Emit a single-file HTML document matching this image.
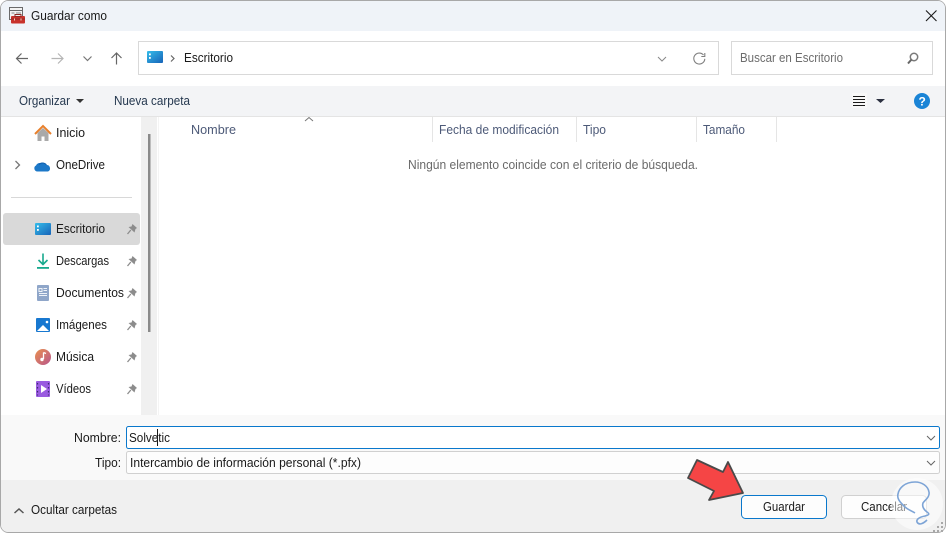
<!DOCTYPE html>
<html><head><meta charset="utf-8"><title>Guardar como</title>
<style>
html,body{margin:0;padding:0;width:946px;height:533px;overflow:hidden;background:#b9b9b9}
svg{display:block;position:absolute;left:0;top:0}
text{font-family:"Liberation Sans",sans-serif;font-size:12.5px;fill:#1a1a1a}
.h{fill:#4d5a78}
</style></head><body>
<svg width="946" height="533" viewBox="0 0 946 533" xmlns="http://www.w3.org/2000/svg">
<defs>
<linearGradient id="dk" x1="0" y1="0" x2="1" y2="1"><stop offset="0" stop-color="#35bdea"/><stop offset="1" stop-color="#1763b8"/></linearGradient>
<linearGradient id="mu" x1="0" y1="0" x2="1" y2="1"><stop offset="0" stop-color="#e9904f"/><stop offset="1" stop-color="#b8568c"/></linearGradient>
<clipPath id="win"><rect x="1" y="1" width="944" height="531" rx="7"/></clipPath>
<g id="pin"><path d="M5.500 0L10 4 8.500 5 7.500 8.500 1.500 3 4.500 2.500z" fill="#8c8c8c"/><path d="M.5 10L3.800 6" stroke="#8c8c8c" stroke-width="1.300" fill="none"/></g>
</defs>
<rect width="946" height="533" fill="#fff"/>
<rect x="0.5" y="0.5" width="945" height="532" rx="8" fill="#fff" stroke="#a8a8a8"/>
<g clip-path="url(#win)">
<rect x="0" y="0" width="946" height="31" fill="#eff3f8"/>
<rect x="0" y="31" width="946" height="55" fill="#fff"/>
<rect x="0" y="86" width="946" height="30" fill="#f3f4f6"/>
<rect x="0" y="116" width="946" height="1" fill="#e4e4e4"/>
<rect x="141" y="117" width="16" height="298" fill="#f0f0f0"/>
<rect x="148" y="134" width="2.500" height="198" fill="#8a8a8a"/>
<rect x="158" y="117" width="1" height="298" fill="#f4f4f4"/>
<rect x="0" y="415" width="946" height="65" fill="#f9f9f9"/>
<rect x="0" y="480" width="946" height="53" fill="#f0f0f0"/>
</g>

<!-- title icon -->
<rect x="9.500" y="7.500" width="13" height="12" fill="#f2f2f2" stroke="#6a6a6a"/>
<path d="M10 10.500h12" stroke="#6a6a6a"/><path d="M11.500 13h3M16 13h5" stroke="#888"/>
<rect x="11" y="16" width="14" height="7.500" rx="1" fill="#c8322b"/>
<rect x="15" y="14.500" width="6" height="2" fill="none" stroke="#8f2a25"/>
<path d="M11 19h14" stroke="#8f2a25"/><path d="M14.500 18.500v2M21 18.500v2" stroke="#f0d0c0"/>
<text x="31" y="20" textLength="76" lengthAdjust="spacingAndGlyphs">Guardar como</text>
<path d="M926 10.500l10.500 10.500M936.500 10.500l-10.500 10.500" stroke="#1a1a1a" stroke-width="1.100" fill="none"/>

<!-- nav buttons -->
<path d="M28 58.500H17M21.500 53.500l-5 5 5 5" stroke="#666" stroke-width="1.200" fill="none"/>
<path d="M51.500 58.500h11M58 53.500l5 5-5 5" stroke="#b5b5b5" stroke-width="1.200" fill="none"/>
<path d="M83.500 56.500l4 4 4-4" stroke="#777" stroke-width="1.200" fill="none"/>
<path d="M116.500 64.500v-11M111.500 58l5-5 5 5" stroke="#666" stroke-width="1.200" fill="none"/>

<!-- address -->
<rect x="138.500" y="41.500" width="580" height="33" fill="#fff" stroke="#d9d9d9" stroke-width="1"/>
<rect x="147" y="51" width="16" height="12" rx="1" fill="url(#dk)"/>
<rect x="149" y="53.500" width="1.800" height="1.800" fill="#fff"/><rect x="149" y="57" width="1.800" height="1.800" fill="#fff"/>
<path d="M171 55.500l3 3-3 3" stroke="#666" stroke-width="1.200" fill="none"/>
<text x="184" y="62" textLength="49" lengthAdjust="spacingAndGlyphs">Escritorio</text>
<path d="M658 57l4 4 4-4" stroke="#888" fill="none"/>
<path d="M703.500 55a5.500 5.500 0 1 0 1.300 3.800" stroke="#808080" stroke-width="1.100" fill="none"/>
<path d="M704.800 53v3.500h-3.500" stroke="#808080" stroke-width="1.100" fill="none"/>

<!-- search -->
<rect x="731.500" y="41.500" width="201" height="33" fill="#fff" stroke="#d9d9d9" stroke-width="1"/>
<text x="740" y="62" textLength="103" lengthAdjust="spacingAndGlyphs" style="fill:#6d6d6d">Buscar en Escritorio</text>
<circle cx="914" cy="57" r="3.700" fill="none" stroke="#7a7a7a" stroke-width="1.500"/>
<path d="M911.500 59.500l-3.500 4" stroke="#666" stroke-width="2" fill="none"/>

<!-- toolbar -->
<text x="19" y="105" textLength="51" lengthAdjust="spacingAndGlyphs" style="fill:#25384f">Organizar</text>
<path d="M76 99h8l-4 4z" fill="#333"/>
<text x="114" y="105" textLength="76" lengthAdjust="spacingAndGlyphs" style="fill:#25384f">Nueva carpeta</text>
<rect x="852" y="93" width="15" height="15" fill="#f8f8f8"/>
<path d="M853 96.500h12M853 99.500h12M853 102.500h12M853 105.500h12" stroke="#1a1a1a" stroke-width="1"/>
<path d="M876 99h9l-4.500 4z" fill="#2b3040"/>
<circle cx="922" cy="101" r="8" fill="#1a84d6"/>
<text x="918.500" y="105.500" style="fill:#fff;font-weight:bold;font-size:12px">?</text>

<!-- headers -->
<path d="M305 121l4-3.500 4 3.500" stroke="#777" fill="none"/>
<text class="h" x="191" y="134" textLength="45" lengthAdjust="spacingAndGlyphs">Nombre</text>
<text class="h" x="439" y="134" textLength="120" lengthAdjust="spacingAndGlyphs">Fecha de modificación</text>
<text class="h" x="583" y="134" textLength="23" lengthAdjust="spacingAndGlyphs">Tipo</text>
<text class="h" x="703" y="134" textLength="42" lengthAdjust="spacingAndGlyphs">Tamaño</text>
<path d="M432.500 117v25M576.500 117v25M696.500 117v25M776.500 117v25" stroke="#e5e5e5"/>
<text x="408" y="169" textLength="290" lengthAdjust="spacingAndGlyphs" style="fill:#6a6a6a">Ningún elemento coincide con el criterio de búsqueda.</text>

<!-- nav pane -->
<path d="M37.500 133l5.500-5 5.500 5v8h-4v-4.500h-3v4.500h-4z" fill="#a9a9a9"/>
<path d="M35 134l8-8 8 8" fill="none" stroke="#e8802c" stroke-width="2"/>
<text x="56" y="137" textLength="29" lengthAdjust="spacingAndGlyphs">Inicio</text>
<path d="M15.500 161l4 4-4 4" stroke="#777" stroke-width="1.300" fill="none"/>
<path d="M37.500 171.500a3.200 3.200 0 0 1-1.500-6 4.500 4.500 0 0 1 4.500-2.500 5 5 0 0 1 6 2 3.400 3.400 0 0 1 1.500 6.500z" fill="#1c78c8"/>
<path d="M39 164.500a5 5 0 0 1 7.500.5" stroke="#0f5fae" fill="none"/>
<text x="56" y="169" textLength="49" lengthAdjust="spacingAndGlyphs">OneDrive</text>
<rect x="11" y="197" width="121" height="1" fill="#d8d8d8"/>

<rect x="3" y="213" width="137" height="32" rx="3" fill="#d9d9d9"/>
<rect x="35" y="223" width="16" height="12" rx="1" fill="url(#dk)"/>
<rect x="37" y="225.500" width="1.800" height="1.800" fill="#fff"/><rect x="37" y="229" width="1.800" height="1.800" fill="#fff"/>
<text x="56" y="233" textLength="49" lengthAdjust="spacingAndGlyphs">Escritorio</text>
<use href="#pin" x="127" y="224"/>

<path d="M43 253.500v11M38.500 260l4.500 4.500 4.500-4.500" stroke="#17a98d" stroke-width="1.600" fill="none"/>
<rect x="37" y="267" width="12" height="1.800" fill="#17a98d"/>
<text x="56" y="265" textLength="53" lengthAdjust="spacingAndGlyphs">Descargas</text>
<use href="#pin" x="127" y="256"/>

<rect x="37" y="285" width="12" height="16" rx="1" fill="#8fa6c9"/>
<path d="M39 288.500h3v3h-3zM43.500 288.500h3.500M43.500 290.500h3.500M39 293.500h8M39 295.500h8" stroke="#eef2f8" fill="none"/>
<text x="56" y="297" textLength="68" lengthAdjust="spacingAndGlyphs">Documentos</text>
<use href="#pin" x="127" y="288"/>

<rect x="36" y="318" width="14" height="14" rx="1" fill="#1878d0"/>
<path d="M37 331l6-6 6 6z" fill="#fff"/><circle cx="47" cy="322" r="1.300" fill="#fff"/>
<text x="56" y="329" textLength="51" lengthAdjust="spacingAndGlyphs">Imágenes</text>
<use href="#pin" x="127" y="320"/>

<circle cx="43" cy="357" r="8" fill="url(#mu)"/>
<path d="M43.500 352.500v6.500" stroke="#fff" stroke-width="1.300"/><path d="M43.500 352.500l2.500 1" stroke="#fff" stroke-width="1.300"/><circle cx="42" cy="359.500" r="1.700" fill="#fff"/>
<text x="56" y="361" textLength="38" lengthAdjust="spacingAndGlyphs">Música</text>
<use href="#pin" x="127" y="352"/>

<rect x="36" y="381" width="14" height="16" rx="1" fill="#9a5be0"/>
<path d="M41 385l6 4-6 4z" fill="#fff"/>
<path d="M37.500 383v1.500M37.500 387v1.500M37.500 391v1.500M37.500 394.500v1M48.500 383v1.500M48.500 387v1.500M48.500 391v1.500M48.500 394.500v1" stroke="#3c2a70" stroke-width="1.200"/>
<text x="56" y="393" textLength="35" lengthAdjust="spacingAndGlyphs">Vídeos</text>
<use href="#pin" x="127" y="384"/>

<!-- form -->
<text x="74" y="442" textLength="47" lengthAdjust="spacingAndGlyphs">Nombre:</text>
<text x="95" y="467" textLength="26" lengthAdjust="spacingAndGlyphs">Tipo:</text>
<rect x="126.500" y="426.500" width="813" height="22" rx="2" fill="#fff" stroke="#0a78cc"/>
<text x="129" y="442" textLength="41" lengthAdjust="spacingAndGlyphs">Solvetic</text>
<rect x="157" y="429" width="1" height="17" fill="#1a1a1a"/>
<path d="M927 436l4 4 4-4" stroke="#666" fill="none"/>
<rect x="126.500" y="451.500" width="813" height="22" rx="2" fill="#fdfdfd" stroke="#d0d0d0"/>
<text x="130" y="467" textLength="231" lengthAdjust="spacingAndGlyphs">Intercambio de información personal (*.pfx)</text>
<path d="M927 461l4 4 4-4" stroke="#666" fill="none"/>

<!-- bottom -->
<path d="M14.500 513l4.500-4 4.500 4" stroke="#555" stroke-width="1.500" fill="none"/>
<text x="31" y="514" textLength="86" lengthAdjust="spacingAndGlyphs">Ocultar carpetas</text>
<rect x="741.500" y="495.500" width="85" height="23" rx="4" fill="#fdfdfd" stroke="#0a78cc"/>
<text x="763" y="511" textLength="42" lengthAdjust="spacingAndGlyphs">Guardar</text>
<rect x="841.500" y="495.500" width="85" height="23" rx="4" fill="#fdfdfd" stroke="#d0d0d0"/>
<text x="861" y="511" textLength="46" lengthAdjust="spacingAndGlyphs">Cancelar</text>

<!-- watermark -->
<circle cx="917" cy="504" r="26" fill="#fff" fill-opacity="0.5"/>
<path d="M915 513C910 510 906 509 903 505 899 501 897 498 898 494 899 488 905 482 915 482 922 482 928 486 929 492 930 497 925 500 923 503 922 506 923 509 927 512 930 514 929 515 925 516 920 517 916 519 917 522 919 526 924 523 927 520" fill="none" stroke="#7da4d6" stroke-width="1.600"/>
<!-- grip -->
<path d="M941 522h2v2h-2zM937 526h2v2h-2zM941 526h2v2h-2zM933 530h2v2h-2zM937 530h2v2h-2zM941 530h2v2h-2z" fill="#a8a8a8"/>

<!-- arrow -->
<path d="M697 460l26 12 5-10 15 31-34 7 5-9-26-13z" fill="#f54545" stroke="#4a4a4a" stroke-width="1.800" stroke-linejoin="round"/>
</svg>
</body></html>
